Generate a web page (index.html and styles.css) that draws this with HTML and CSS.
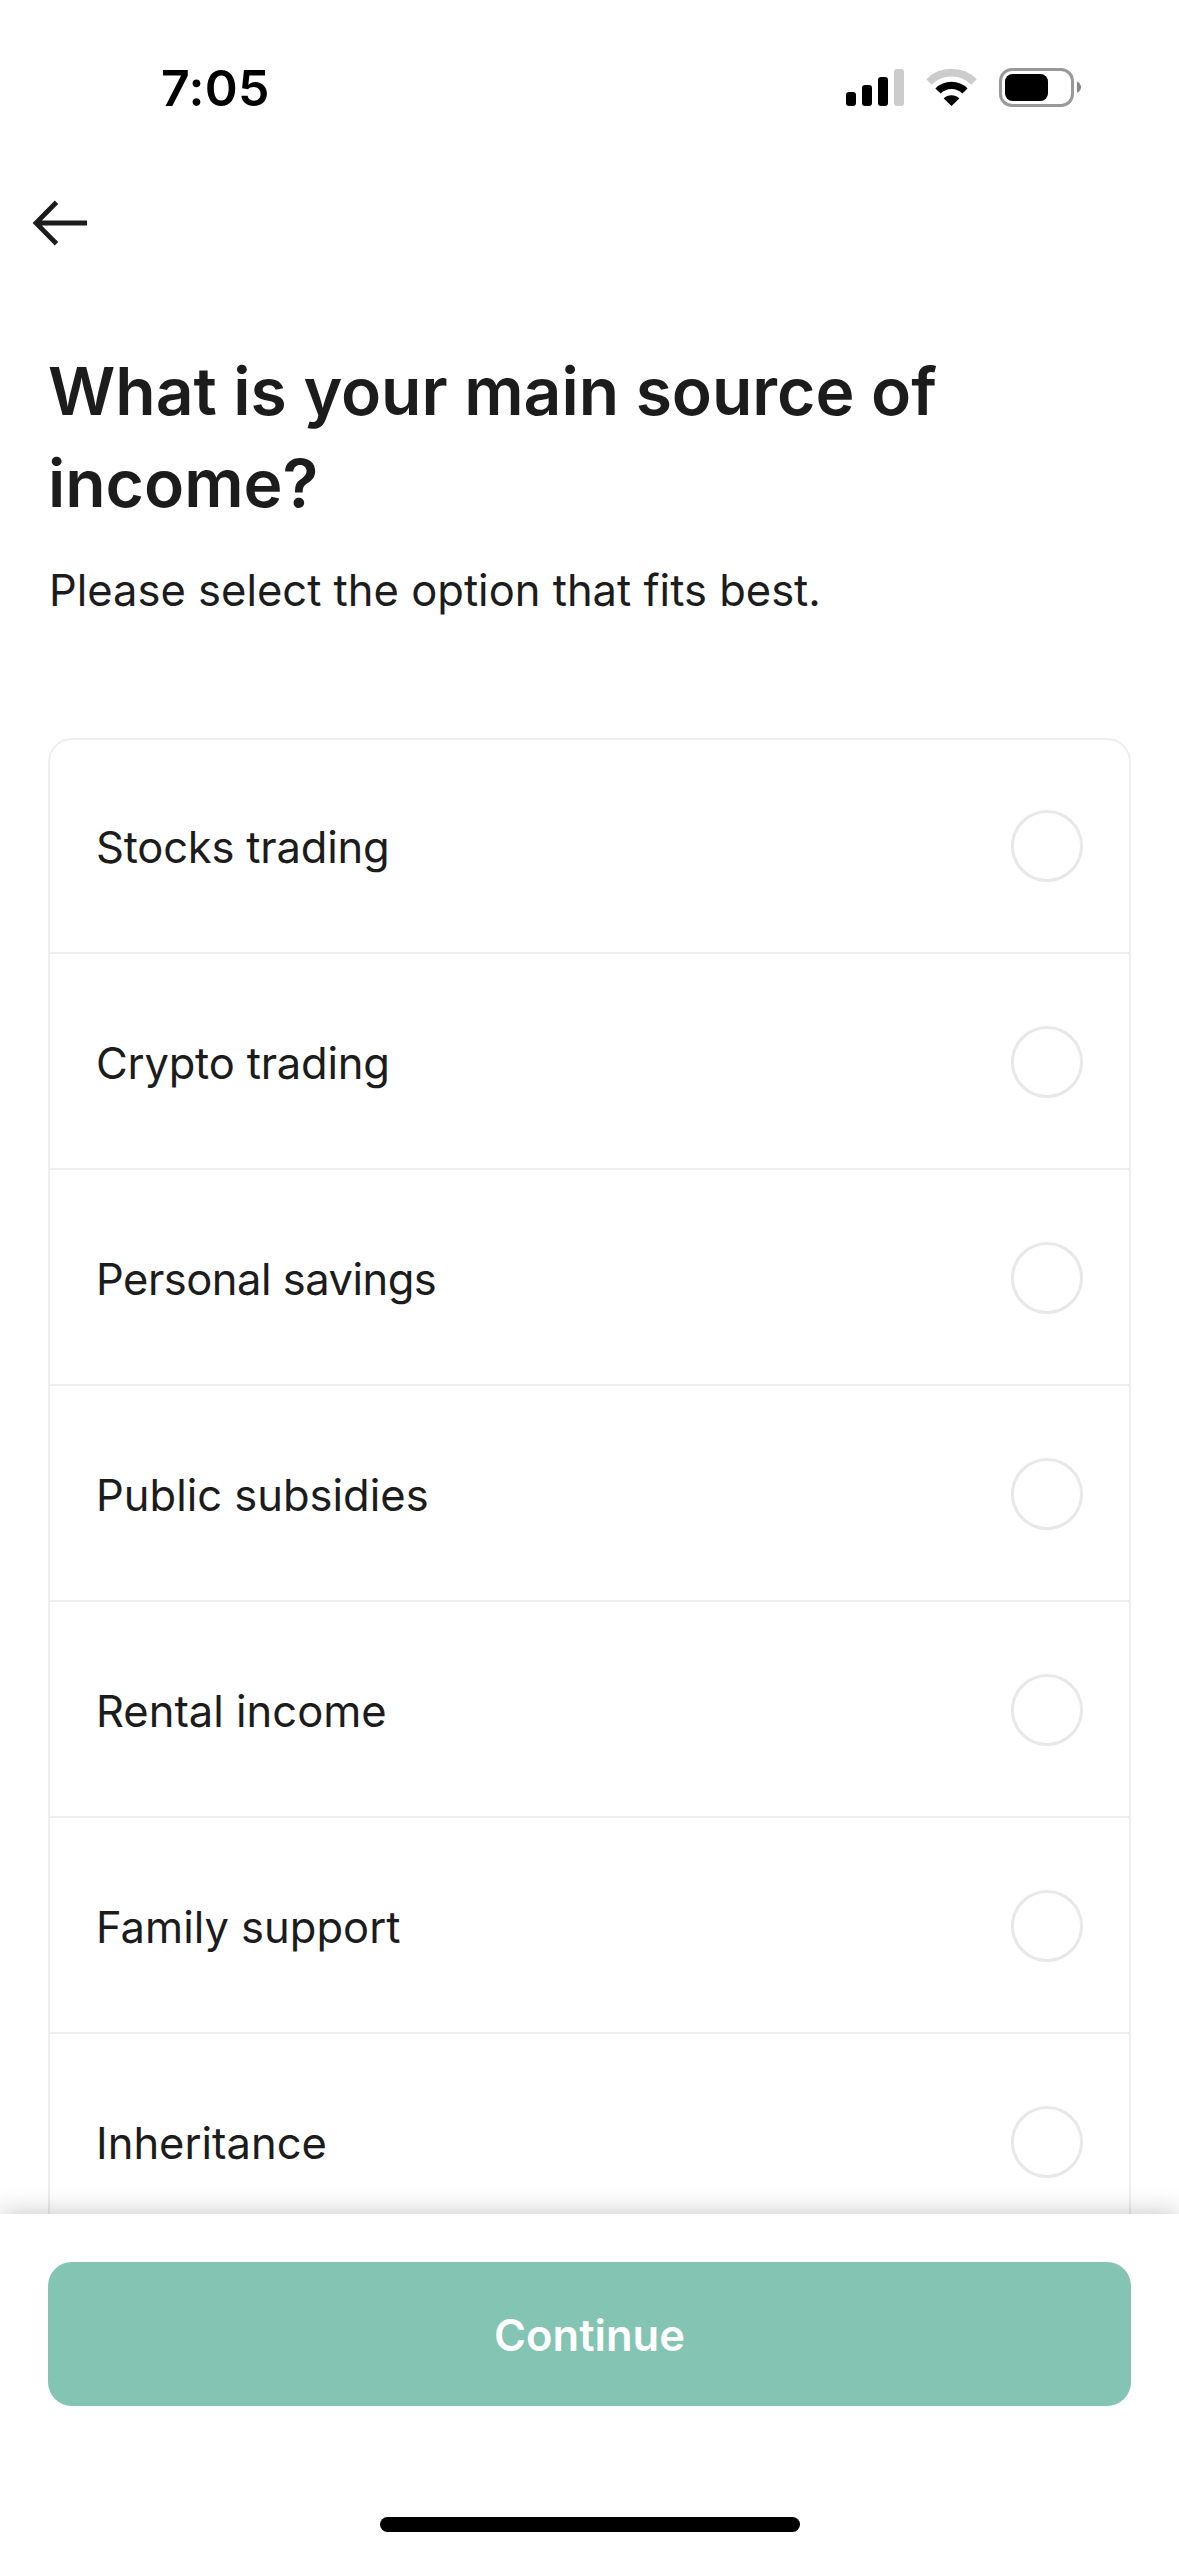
FILE: index.html
```html
<!DOCTYPE html>
<html lang="en">
<head>
<meta charset="utf-8">
<title>Source of income</title>
<link rel="stylesheet" href="styles.css">
</head>
<body>
<div class="screen">
  <header class="status-bar">
    <span class="clock">7:05</span>
    <svg class="status-icons" width="238" height="40" viewBox="845 68 238 40" aria-hidden="true">
      <rect x="846" y="92" width="10" height="14" rx="3"/>
      <rect x="862" y="85" width="10" height="21" rx="3"/>
      <rect x="878" y="77" width="10" height="29" rx="3"/>
      <rect x="894" y="69" width="10" height="37" rx="3" fill="#ccc"/>
      <path d="M929 82A31.8 31.8 0 0 1 974 82" fill="none" stroke="#ccc" stroke-width="7.6"/>
      <path d="M938 91A19.1 19.1 0 0 1 965 91" fill="none" stroke="#000" stroke-width="7.4"/>
      <path d="M951.5 106L943.7 98.4A11 11 0 0 1 959.3 98.4Z"/>
      <rect x="1000.5" y="69.5" width="72" height="36" rx="11.5" fill="none" stroke="#999" stroke-width="3"/>
      <rect x="1005" y="74" width="43" height="27" rx="7.5"/>
      <path d="M1077 81.5Q1081 83.5 1081 87.3Q1081 91 1077 93Z" fill="#888"/>
    </svg>
  </header>
  <nav class="nav">
    <svg class="back" width="60" height="54" viewBox="30 196 60 54" role="img" aria-label="Back">
      <path d="M56.5 202.3L36 223L56.5 243.7M36 223H87" fill="none" stroke="#1c1c1c" stroke-width="4.8"/>
    </svg>
  </nav>
  <main class="content">
    <h1 class="title">What is your main source of income?</h1>
    <p class="subtitle">Please select the option that fits best.</p>
    <ul class="options">
      <li class="option"><span class="label label-snug">Stocks trading</span><span class="radio"></span></li>
      <li class="option"><span class="label label-snug">Crypto trading</span><span class="radio"></span></li>
      <li class="option"><span class="label label-tight">Personal savings</span><span class="radio"></span></li>
      <li class="option"><span class="label">Public subsidies</span><span class="radio"></span></li>
      <li class="option"><span class="label">Rental income</span><span class="radio"></span></li>
      <li class="option"><span class="label">Family support</span><span class="radio"></span></li>
      <li class="option"><span class="label">Inheritance</span><span class="radio"></span></li>
    </ul>
  </main>
  <footer class="footer">
    <button class="continue" type="button">Continue</button>
    <div class="home-indicator"></div>
  </footer>
</div>
</body>
</html>
```
FILE: styles.css
```css
* { box-sizing: border-box; margin: 0; padding: 0; }

body {
  background: #fff;
  color: #1c1c1c;
  font-family: Inter, "Liberation Sans", sans-serif;
}

.screen {
  display: flex;
  flex-direction: column;
  width: 1179px;
  height: 2556px;
  overflow: hidden;
}

.status-bar {
  display: flex;
  flex: none;
  align-items: center;
  justify-content: space-between;
  height: 176px;
  padding: 0 96px 0 161px;
}

.clock {
  color: #000;
  font-size: 50px;
  font-weight: 600;
  line-height: 60px;
  letter-spacing: 0.3px;
}

.status-icons { display: block; }

.nav {
  flex: none;
  height: 169px;
  padding: 20px 30px 0;
}

.back { display: block; }

.content {
  flex: 1;
  min-height: 0;
  padding: 0 48px;
  overflow: hidden;
}

.title {
  font-size: 66px;
  font-weight: 600;
  line-height: 92px;
  letter-spacing: -0.04px;
}

.subtitle {
  margin-top: 25px;
  padding-left: 1px;
  font-size: 43.5px;
  line-height: 72px;
}

.options {
  margin-top: 112px;
  border: 2px solid #eee;
  border-radius: 24px;
  list-style: none;
}

.option {
  display: flex;
  align-items: center;
  justify-content: space-between;
  height: 216px;
  padding: 0 46px;
  border-bottom: 2px solid #eee;
}

.option:first-child { margin-top: -2px; }

.label {
  padding-top: 4px;
  font-size: 43.5px;
}

.label-snug { letter-spacing: -0.2px; }
.label-tight { letter-spacing: -0.5px; }

.radio {
  width: 72px;
  height: 72px;
  margin-top: 2px;
  border: 3px solid #e8e8e8;
  border-radius: 50%;
}

.footer {
  z-index: 1;
  display: flex;
  flex: none;
  flex-direction: column;
  align-items: center;
  justify-content: space-between;
  height: 342px;
  padding: 48px 48px 24px;
  background: #fff;
  box-shadow: 0 0 26px rgba(0, 0, 0, 0.24);
}

.continue {
  width: 100%;
  height: 144px;
  padding-top: 2px;
  border: 0;
  border-radius: 24px;
  background: #83c4b2;
  color: #fff;
  font-family: inherit;
  font-size: 43.5px;
  font-weight: 600;
  line-height: 60px;
}

.home-indicator {
  width: 420px;
  height: 15px;
  border-radius: 8px;
  background: #000;
}
```
